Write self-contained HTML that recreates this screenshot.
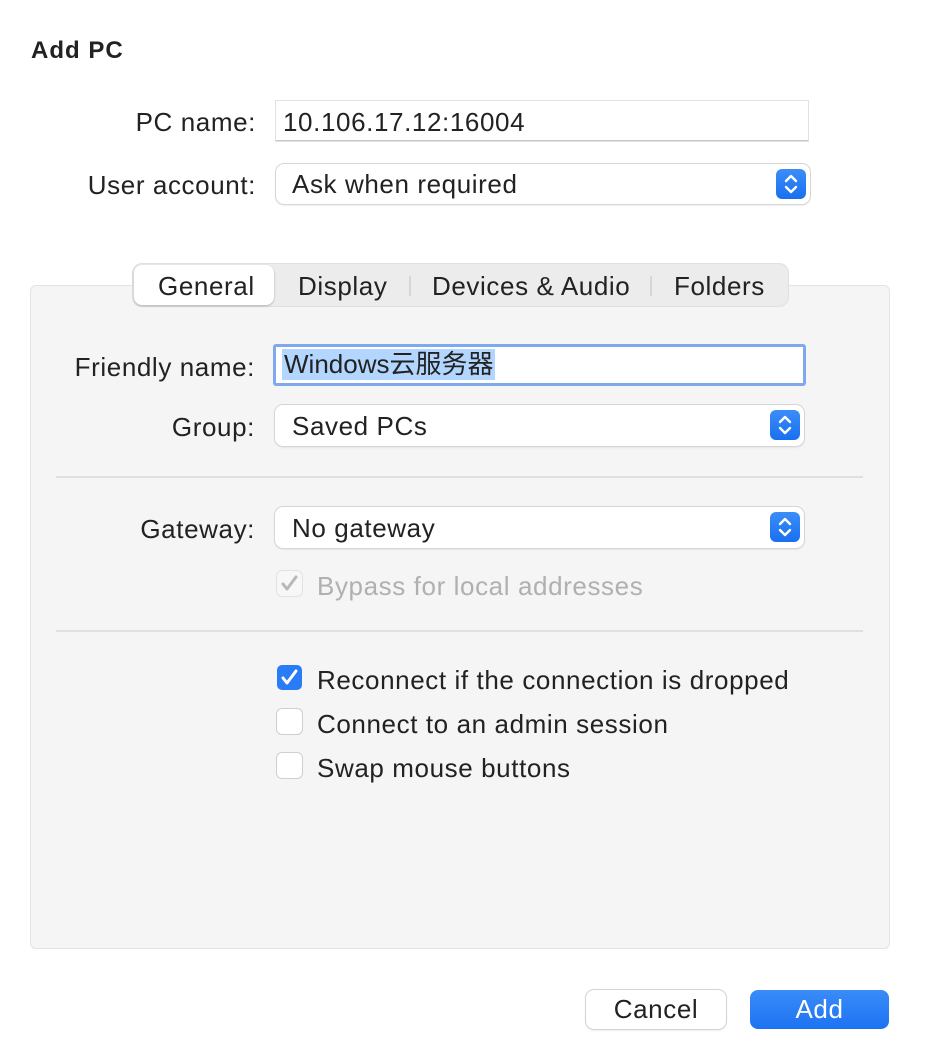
<!DOCTYPE html>
<html><head><meta charset="utf-8"><style>
body{margin:0;width:926px;height:1054px;background:#fff;font-family:"Liberation Sans","Noto Sans CJK SC",sans-serif;color:#222;position:relative;overflow:hidden}
.a{position:absolute}
.t{font-size:26px;line-height:28px;white-space:nowrap;letter-spacing:0.6px}
.lbl{text-align:right;width:220px}
.pop{background:#fff;border-radius:8px;box-shadow:0 0 0 1px #d6d6d6,0 1px 2px rgba(0,0,0,.15)}
.arr{position:absolute;right:4px;top:5px;width:30px;height:30px;border-radius:6px;background:linear-gradient(#3b8ef8,#1a6ff0)}
.cb{width:25px;height:25px;border-radius:5px;background:#fff;box-shadow:0 0 0 1px #cfcfcf}
.sep{height:2px;background:#e0e0e0;left:56px;width:807px}
</style></head><body>
<div class="a t" style="left:31px;top:37px;font-weight:bold;font-size:24px;letter-spacing:1px">Add PC</div>

<div class="a t lbl" style="left:36px;top:108px">PC name:</div>
<div class="a" style="left:276px;top:101px;width:532px;height:39px;background:#fff;box-shadow:0 0 0 1px #e2e2e2;border-bottom:1px solid #c8c8c8"></div>
<div class="a t" style="left:283px;top:108px">10.106.17.12:16004</div>

<div class="a t lbl" style="left:36px;top:171px">User account:</div>
<div class="a pop" style="left:276px;top:164px;width:534px;height:40px"><div class="arr"><svg width="30" height="30"><path d="M10 12l5-5 5 5M10 18l5 5 5-5" stroke="#fff" stroke-width="2.4" fill="none" stroke-linecap="round" stroke-linejoin="round"/></svg></div></div>
<div class="a t" style="left:292px;top:170px">Ask when required</div>

<div class="a" style="left:30px;top:285px;width:858px;height:662px;background:#f5f5f5;border:1px solid #e3e3e3;border-radius:6px"></div>
<div class="a" style="left:133px;top:264px;width:655px;height:42px;background:#ececec;border-radius:9px;box-shadow:0 0 0 1px #e0e0e0"></div>
<div class="a" style="left:134px;top:265px;width:140px;height:40px;background:#fff;border-radius:8px;box-shadow:0 1px 2px rgba(0,0,0,.25)"></div>
<div class="a" style="left:409px;top:276px;width:2px;height:20px;background:#d6d6d6"></div>
<div class="a" style="left:650px;top:276px;width:2px;height:20px;background:#d6d6d6"></div>
<div class="a t" style="left:158px;top:272px">General</div>
<div class="a t" style="left:298px;top:272px">Display</div>
<div class="a t" style="left:432px;top:272px">Devices &amp; Audio</div>
<div class="a t" style="left:674px;top:272px">Folders</div>

<div class="a t lbl" style="left:35px;top:353px">Friendly name:</div>
<div class="a" style="left:273px;top:344px;width:527px;height:36px;background:#fff;border:3px solid #80a8ef;border-radius:3px"></div>
<div class="a t" style="left:282px;top:349px;letter-spacing:0"><span style="background:#b3d6ff;padding:1px 2px 2px 2px;display:inline-block;line-height:28px">Windows云服务器</span></div>

<div class="a t lbl" style="left:35px;top:413px">Group:</div>
<div class="a pop" style="left:275px;top:405px;width:529px;height:41px"><div class="arr"><svg width="30" height="30"><path d="M10 12l5-5 5 5M10 18l5 5 5-5" stroke="#fff" stroke-width="2.4" fill="none" stroke-linecap="round" stroke-linejoin="round"/></svg></div></div>
<div class="a t" style="left:292px;top:412px">Saved PCs</div>

<div class="a sep" style="top:476px"></div>

<div class="a t lbl" style="left:35px;top:515px">Gateway:</div>
<div class="a pop" style="left:275px;top:507px;width:529px;height:41px"><div class="arr"><svg width="30" height="30"><path d="M10 12l5-5 5 5M10 18l5 5 5-5" stroke="#fff" stroke-width="2.4" fill="none" stroke-linecap="round" stroke-linejoin="round"/></svg></div></div>
<div class="a t" style="left:292px;top:514px">No gateway</div>

<div class="a cb" style="left:277px;top:571px;background:#f7f7f7;box-shadow:0 0 0 1px #e2e2e2"><svg width="25" height="25"><path d="M6 13l4 5 9-12" stroke="#b8b8b8" stroke-width="3" fill="none" stroke-linecap="round" stroke-linejoin="round"/></svg></div>
<div class="a t" style="left:317px;top:572px;color:#b0b0b0">Bypass for local addresses</div>

<div class="a sep" style="top:630px"></div>

<div class="a cb" style="left:277px;top:665px;background:#2a7cf6;box-shadow:none"><svg width="25" height="25"><path d="M6 13l4 5 9-12" stroke="#fff" stroke-width="3" fill="none" stroke-linecap="round" stroke-linejoin="round"/></svg></div>
<div class="a t" style="left:317px;top:666px">Reconnect if the connection is dropped</div>
<div class="a cb" style="left:277px;top:709px"></div>
<div class="a t" style="left:317px;top:710px">Connect to an admin session</div>
<div class="a cb" style="left:277px;top:753px"></div>
<div class="a t" style="left:317px;top:754px">Swap mouse buttons</div>

<div class="a" style="left:586px;top:990px;width:140px;height:39px;background:#fff;border-radius:8px;box-shadow:0 0 0 1px #d4d4d4,0 1px 2px rgba(0,0,0,.15)"></div>
<div class="a t" style="left:586px;top:995px;width:140px;text-align:center">Cancel</div>
<div class="a" style="left:750px;top:990px;width:139px;height:39px;background:linear-gradient(#3a8cf8,#1d72f2);border-radius:8px"></div>
<div class="a t" style="left:750px;top:995px;width:139px;text-align:center;color:#fff">Add</div>
</body></html>
